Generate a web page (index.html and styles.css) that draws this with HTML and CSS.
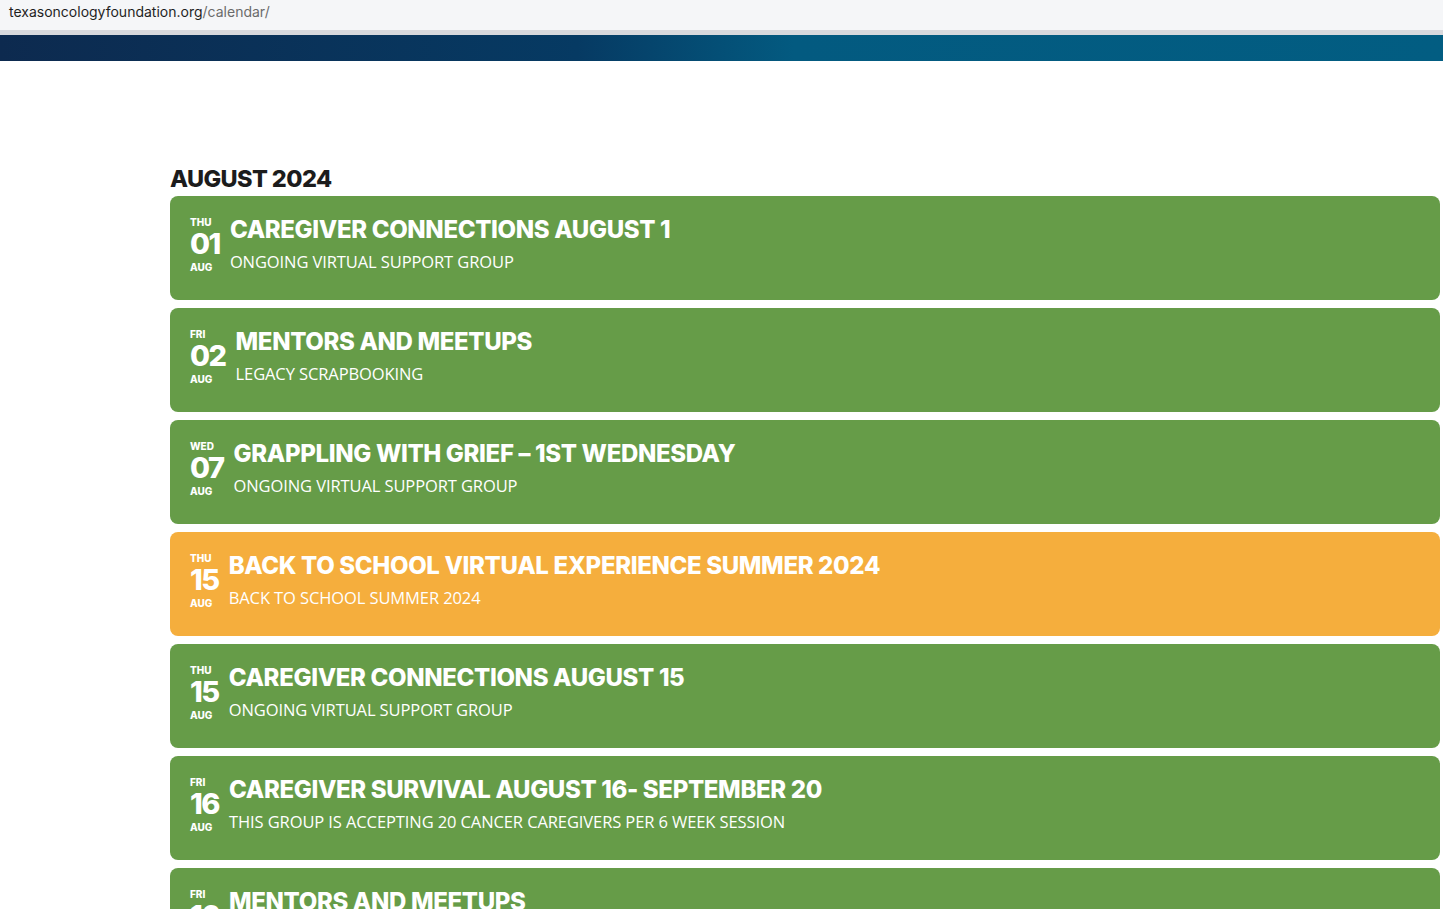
FILE: index.html
```html
<!DOCTYPE html>
<html lang="en">
<head>
    <meta charset="UTF-8">
    <meta name="viewport" content="width=device-width, initial-scale=1.0">
    <title>Calendar - Texas Oncology Foundation</title>
    <link rel="stylesheet" href="styles.css">
</head>
<body>

<div class="address-bar">
    <span class="host">texasoncologyfoundation.org</span><span class="path">/calendar/</span>
</div>
<div class="site-header"></div>

<div class="calendar">
    <h2 class="month-title">AUGUST 2024</h2>

    <a class="event green" href="#">
        <div class="date">
            <span class="dow">THU</span>
            <span class="day">01</span>
            <span class="mon">AUG</span>
        </div>
        <div class="info">
            <h3>CAREGIVER CONNECTIONS AUGUST 1</h3>
            <p>ONGOING VIRTUAL SUPPORT GROUP</p>
        </div>
    </a>

    <a class="event green" href="#">
        <div class="date">
            <span class="dow">FRI</span>
            <span class="day">02</span>
            <span class="mon">AUG</span>
        </div>
        <div class="info">
            <h3>MENTORS AND MEETUPS</h3>
            <p>LEGACY SCRAPBOOKING</p>
        </div>
    </a>

    <a class="event green" href="#">
        <div class="date">
            <span class="dow">WED</span>
            <span class="day">07</span>
            <span class="mon">AUG</span>
        </div>
        <div class="info">
            <h3>GRAPPLING WITH GRIEF – 1ST WEDNESDAY</h3>
            <p>ONGOING VIRTUAL SUPPORT GROUP</p>
        </div>
    </a>

    <a class="event orange" href="#">
        <div class="date">
            <span class="dow">THU</span>
            <span class="day">15</span>
            <span class="mon">AUG</span>
        </div>
        <div class="info">
            <h3>BACK TO SCHOOL VIRTUAL EXPERIENCE SUMMER 2024</h3>
            <p>BACK TO SCHOOL SUMMER 2024</p>
        </div>
    </a>

    <a class="event green" href="#">
        <div class="date">
            <span class="dow">THU</span>
            <span class="day">15</span>
            <span class="mon">AUG</span>
        </div>
        <div class="info">
            <h3>CAREGIVER CONNECTIONS AUGUST 15</h3>
            <p>ONGOING VIRTUAL SUPPORT GROUP</p>
        </div>
    </a>

    <a class="event green" href="#">
        <div class="date">
            <span class="dow">FRI</span>
            <span class="day">16</span>
            <span class="mon">AUG</span>
        </div>
        <div class="info">
            <h3>CAREGIVER SURVIVAL AUGUST 16- SEPTEMBER 20</h3>
            <p>THIS GROUP IS ACCEPTING 20 CANCER CAREGIVERS PER 6 WEEK SESSION</p>
        </div>
    </a>

    <a class="event green" href="#">
        <div class="date">
            <span class="dow">FRI</span>
            <span class="day">16</span>
            <span class="mon">AUG</span>
        </div>
        <div class="info">
            <h3>MENTORS AND MEETUPS</h3>
            <p>LEGACY SCRAPBOOKING</p>
        </div>
    </a>
</div>

</body>
</html>
```

FILE: styles.css
```css
body {
    margin: 0;
    font-family: "Open Sans", Arial, sans-serif;
    background-color: #fff;
    overflow: hidden;
}
.address-bar {
    height: 30px;
    padding-left: 9px;
    background-color: #f5f6f8;
    font-family: Inter, Arial, sans-serif;
    font-size: 14px;
    line-height: 24px;
    color: #1f1f1f;
    border-bottom: 5px solid #d8d9dd;
}
.address-bar .path {
    color: #6b6b6b;
}
.site-header {
    height: 26px;
    background: linear-gradient(90deg, #0d2a4f 0%, #063a63 40%, #035a80 55%, #025d82 100%);
}
.calendar {
    padding: 103px 3px 0 170px;
}
.month-title {
    margin: 0 0 2px;
    font-family: Inter, Arial, sans-serif;
    font-weight: 800;
    font-size: 23.5px;
    line-height: 30px;
    letter-spacing: -0.6px;
    color: #1c1c1c;
}
.event {
    display: flex;
    align-items: flex-start;
    gap: 10px;
    height: 104px;
    box-sizing: border-box;
    padding: 20px 20px 0;
    margin-bottom: 8px;
    border-radius: 8px;
    color: #fff;
    text-decoration: none;
}
.event.green {
    background-color: #669c48;
}
.event.orange {
    background-color: #f5ae3d;
}
.date {
    display: flex;
    flex-direction: column;
    font-family: Inter, Arial, sans-serif;
    font-weight: 800;
    line-height: 1;
}
.date .dow,
.date .mon {
    font-size: 10px;
}
.date .dow {
    margin-top: 1px;
}
.date .day {
    font-size: 29px;
    letter-spacing: -1.5px;
    margin: 2px 0 4px;
}
.info h3 {
    margin: 0;
    font-family: Inter, Arial, sans-serif;
    font-weight: 800;
    font-size: 24px;
    line-height: 28px;
    letter-spacing: -0.35px;
}
.info p {
    margin: 7px 0 0;
    font-size: 16.5px;
    font-weight: 400;
    line-height: 22px;
    letter-spacing: -0.1px;
}
```
